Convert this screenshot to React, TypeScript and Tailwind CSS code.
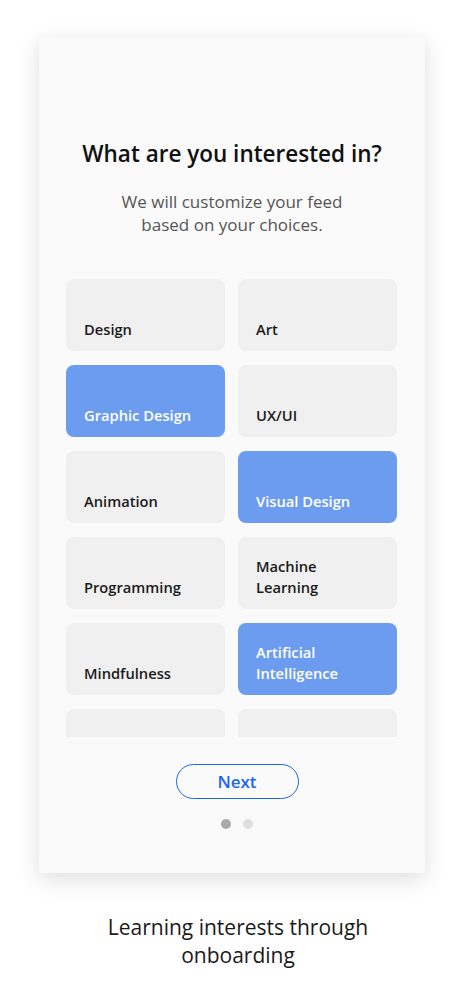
import React from "react";

const items: { label: React.ReactNode; selected?: boolean }[] = [
  { label: "Design" },
  { label: "Art" },
  { label: "Graphic Design", selected: true },
  { label: "UX/UI" },
  { label: "Animation" },
  { label: "Visual Design", selected: true },
  { label: "Programming" },
  { label: (<>Machine<br />Learning</>) },
  { label: "Mindfulness" },
  { label: (<>Artificial<br />Intelligence</>), selected: true },
  { label: "" },
  { label: "" },
];

export default function App() {
  return (
    <div
      className="w-[465px] h-[1006px] bg-white flex flex-col items-start pt-[37px]"
      style={{ fontFamily: '"Open Sans", "Noto Sans", sans-serif' }}
    >
      <div className="ml-[39px] w-[386px] h-[836px] bg-[#fafafa] shadow-[0_6px_22px_rgba(0,0,0,0.13)] flex flex-col items-center pt-[101px]">
        <h1 className="text-[22.5px] leading-[32px] font-semibold text-[#111]">
          What are you interested in?
        </h1>
        <p className="mt-[20px] text-[17px] leading-[23px] text-[#555] text-center">
          We will customize your feed
          <br />
          based on your choices.
        </p>
        <div className="self-start ml-[27px] mt-[43px] w-[331px] h-[458px] overflow-hidden">
          <div className="grid grid-cols-2 gap-x-[13px] gap-y-[14px]">
            {items.map((it, i) => (
              <div
                key={i}
                className={
                  "h-[72px] rounded-[8px] flex items-end px-[18px] pb-[11px] " +
                  (it.selected ? "bg-[#6c9cf0] text-white" : "bg-[#f0f0f0] text-[#1a1a1a]")
                }
              >
                <span className="text-[14.7px] leading-[21px] font-semibold whitespace-nowrap">
                  {it.label}
                </span>
              </div>
            ))}
          </div>
        </div>
        <button className="ml-[10px] mt-[27px] w-[123px] h-[35px] rounded-full border-[1.5px] border-[#1a66ee] text-[#1a66ee] text-[17px] font-semibold leading-none flex items-center justify-center">
          Next
        </button>
        <div className="ml-[10px] mt-[20px] flex gap-[12px]">
          <span className="w-[10px] h-[10px] rounded-full bg-[#aaaaaa]" />
          <span className="w-[10px] h-[10px] rounded-full bg-[#dedede]" />
        </div>
      </div>
      <p className="mt-[40px] w-[465px] pl-[11px] text-[21px] leading-[28px] text-[#1a1a1a] text-center">
        Learning interests through
        <br />
        onboarding
      </p>
    </div>
  );
}
